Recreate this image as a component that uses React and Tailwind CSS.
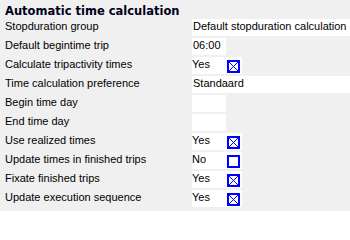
import React from "react";

const rows = [
  { label: "Stopduration group", value: "Default stopduration calculation", w: "full" },
  { label: "Default begintime trip", value: "06:00", w: "short" },
  { label: "Calculate tripactivity times", value: "Yes", w: "check", checked: true },
  { label: "Time calculation preference", value: "Standaard", w: "full" },
  { label: "Begin time day", value: "", w: "short" },
  { label: "End time day", value: "", w: "short" },
  { label: "Use realized times", value: "Yes", w: "check", checked: true },
  { label: "Update times in finished trips", value: "No", w: "check", checked: false },
  { label: "Fixate finished trips", value: "Yes", w: "check", checked: true },
  { label: "Update execution sequence", value: "Yes", w: "check", checked: true },
];

function Check({ checked }) {
  return (
    <div className="w-[13px] h-[13px] border-2 border-[#0000ff] bg-white box-border shrink-0">
      {checked && (
        <svg width="9" height="9" viewBox="0 0 9 9" className="block">
          <path d="M0 0L9 9M9 0L0 9" stroke="#0000ff" strokeWidth="1" shapeRendering="crispEdges" />
        </svg>
      )}
    </div>
  );
}

export default function App() {
  return (
    <div
      className="w-[350px] h-[211px] bg-[#f0f0f0] overflow-hidden text-[11px] text-black"
      style={{ fontFamily: '"Liberation Sans", Arial, sans-serif' }}
    >
      <div
        className="h-[19px] pl-[5px] pt-[4px] text-[11.5px] font-bold leading-[14px] text-[#000020]"
        style={{ fontFamily: '"DejaVu Sans", Verdana, sans-serif' }}
      >
        Automatic time calculation
      </div>
      <div className="grid grid-cols-[192px_1fr] gap-y-[2px]">
        {rows.map((r, i) => (
          <React.Fragment key={i}>
            <div className="h-[17px] pl-[5px] leading-[13px] pt-[1px] whitespace-nowrap">{r.label}</div>
            <div className="h-[17px] flex">
              {r.w === "full" && (
                <div className="flex-1 bg-white pl-[1px] pt-[1px] leading-[13px] whitespace-nowrap">{r.value}</div>
              )}
              {r.w === "short" && (
                <div className="w-[34px] bg-white pl-[1px] pt-[1px] leading-[13px] whitespace-nowrap">{r.value}</div>
              )}
              {r.w === "check" && (
                <div className="w-[50px] bg-white flex items-start justify-between pr-[2px]">
                  <span className="leading-[13px] pt-[1px]">{r.value}</span>
                  <div className="pt-[3px]">
                    <Check checked={r.checked} />
                  </div>
                </div>
              )}
            </div>
          </React.Fragment>
        ))}
      </div>
    </div>
  );
}
